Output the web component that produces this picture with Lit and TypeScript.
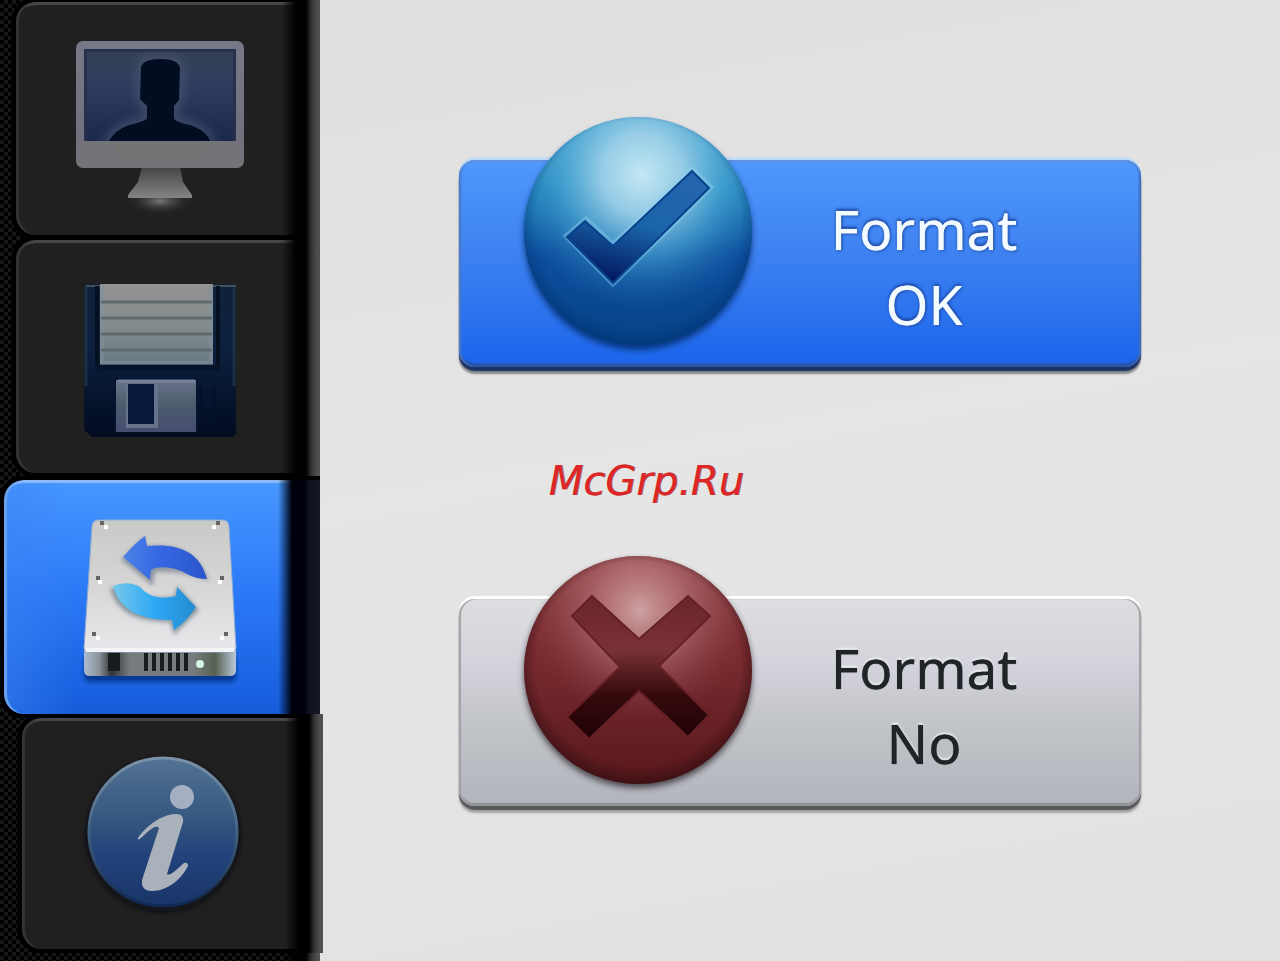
import { LitElement, html, css, svg } from "lit";
import { customElement, state } from "lit/decorators.js";

const monitorIcon = svg`
  <svg viewBox="72 22 176 192" aria-hidden="true">
    <defs>
      <linearGradient id="frame" x1="0" y1="0" x2="0" y2="1">
        <stop offset="0" stop-color="#777a86" /><stop offset=".75" stop-color="#71717f" /><stop offset="1" stop-color="#777475" />
      </linearGradient>
      <linearGradient id="screen" x1="0" y1="0" x2="0" y2="1">
        <stop offset="0" stop-color="#354054" /><stop offset=".3" stop-color="#303f61" /><stop offset="1" stop-color="#1b284d" />
      </linearGradient>
      <linearGradient id="stand" x1="0" y1="0" x2="0" y2="1">
        <stop offset="0" stop-color="#444" /><stop offset="1" stop-color="#858583" />
      </linearGradient>
      <radialGradient id="reflection">
        <stop offset="0" stop-color="#777" /><stop offset="1" stop-color="#222" stop-opacity="0" />
      </radialGradient>
      <clipPath id="screenClip"><rect x="85" y="49" width="150" height="91" /></clipPath>
      <filter id="halo"><feGaussianBlur stdDeviation="4" /></filter>
    </defs>
    <ellipse cx="160" cy="200" rx="36" ry="14" fill="url(#reflection)" />
    <path d="M142 166h38l3 15 9 13v3h-64v-3l10-13z" fill="url(#stand)" />
    <rect x="76" y="40" width="168" height="127" rx="7" fill="url(#frame)" />
    <path d="M77 140h166v20q0 6-6 6H83q-6 0-6-6z" fill="#73747a" />
    <path d="M112 142h98l-20 20h-62z" fill="#75776e" opacity=".6" />
    <rect x="84" y="48" width="152" height="92" fill="#26304a" />
    <rect x="87" y="51" width="146" height="89" fill="url(#screen)" />
    <g clip-path="url(#screenClip)">
      <path d="M141 66q2-8 20-8 17 0 19 9l-1 32-5 6v13q5 4 16 6 17 6 20 16h-101q6-11 20-16 13-3 18-6v-13l-7-7z" fill="#4d5972" stroke="#4d5972" stroke-width="10" opacity=".6" filter="url(#halo)" />
      <path d="M141 66q2-8 20-8 17 0 19 9l-1 32-5 6v13q5 4 16 6 17 6 20 16h-101q6-11 20-16 13-3 18-6v-13l-7-7z" fill="#020d22" />
    </g>
  </svg>`;

const floppyIcon = svg`
  <svg viewBox="72 261 176 192" aria-hidden="true">
    <defs>
      <linearGradient id="disk" x1="0" y1="0" x2="0" y2="1">
        <stop offset="0" stop-color="#10223a" /><stop offset=".4" stop-color="#0c2140" /><stop offset="1" stop-color="#020b20" />
      </linearGradient>
      <linearGradient id="paper" x1="0" y1="0" x2="0" y2="1">
        <stop offset="0" stop-color="#929391" /><stop offset=".5" stop-color="#838b8d" /><stop offset="1" stop-color="#6a7a84" />
      </linearGradient>
      <linearGradient id="shutter" x1="0" y1="0" x2="0" y2="1">
        <stop offset="0" stop-color="#68738a" /><stop offset=".5" stop-color="#4d5b6b" /><stop offset="1" stop-color="#464d70" />
      </linearGradient>
    </defs>
    <path d="M84 284h152v148q0 5-5 5H92l-8-7z" fill="url(#disk)" />
    <path d="M86 286v100M234 286v100" stroke="#1b3043" stroke-width="3" />
    <path d="M86 286h150" stroke="#41505a" stroke-width="2" />
    <path d="M97 286v80M218 286v80" stroke="#061020" stroke-width="4" />
    <rect x="100" y="284" width="113" height="80" fill="url(#paper)" />
    <path d="M102 284v79h109v-79" fill="none" stroke="#8291a0" stroke-width="4" opacity=".5" />
    <path d="M101 302h111M101 318h111M101 334h111M101 350h111" stroke="#5f6a6c" stroke-width="3" />
    <path d="M97 368h124" stroke="#05162c" stroke-width="6" />
    <path d="M114 378h84v54h-84z" fill="#051530" />
    <path d="M116 380h80v52h-80z" fill="url(#shutter)" />
    <path d="M118 381h77" stroke="#78839b" stroke-width="3" />
    <path d="M126 384h32v44h-32z" fill="#67728b" />
    <path d="M128 384h26v40h-26z" fill="#07183a" />
    <path d="M201 386v46M214 386v46" stroke="#03102a" stroke-width="3" />
  </svg>`;

const driveIcon = svg`
  <svg viewBox="72 501 176 192" aria-hidden="true">
    <defs>
      <linearGradient id="lid" x1="0" y1="0" x2="0" y2="1">
        <stop offset="0" stop-color="#c9c9c8" /><stop offset=".5" stop-color="#d6d6d6" /><stop offset="1" stop-color="#e9e8ec" />
      </linearGradient>
      <linearGradient id="front" x1="0" y1="0" x2="1" y2="0">
        <stop offset="0" stop-color="#a9bcd0" /><stop offset=".1" stop-color="#8b9296" /><stop offset=".18" stop-color="#303637" />
        <stop offset=".3" stop-color="#777b7d" /><stop offset=".72" stop-color="#777d80" /><stop offset=".86" stop-color="#566150" /><stop offset="1" stop-color="#b9c9d8" />
      </linearGradient>
      <linearGradient id="darkArrow" x1="0" y1="0" x2="1" y2="0">
        <stop offset="0" stop-color="#4c82e4" /><stop offset=".4" stop-color="#3769e4" /><stop offset="1" stop-color="#2a55c9" />
      </linearGradient>
      <linearGradient id="lightArrow" x1="0" y1="0" x2="1" y2="0">
        <stop offset="0" stop-color="#75c8ec" /><stop offset=".5" stop-color="#2ea8f5" /><stop offset="1" stop-color="#258bd0" />
      </linearGradient>
      <filter id="soft" x="-20%" y="-20%" width="140%" height="140%"><feGaussianBlur stdDeviation="2" /></filter>
    </defs>
    <rect x="84" y="655" width="152" height="27" rx="6" fill="#052a78" opacity=".75" filter="url(#soft)" />
    <path d="M84 646h152v24q0 6-6 6H90q-6 0-6-6z" fill="url(#front)" />
    <path d="M98 520h125q5 0 6 6l7 122q0 4-4 4H88q-4 0-4-4l8-122q1-6 6-6z" fill="url(#lid)" stroke="#8dabd0" stroke-width="1" />
    <path d="M86 650h148" stroke="#f4f3f6" stroke-width="4" />
    <path d="M146 653v18M154 653v18M162 653v18M170 653v18M178 653v18M186 653v18" stroke="#161c20" stroke-width="4" />
    <path d="M108 653h12v18h-12z" fill="#171d1e" />
    <circle cx="200" cy="664" r="4" fill="#d6f4df" />
    <path d="M100 521h4v4h-4zM216 521h4v4h-4zM96 576h4v4h-4zM220 576h4v4h-4zM92 632h4v4h-4zM224 632h4v4h-4z" fill="#69645f" />
    <path d="M104 525h4v4h-4zM212 525h4v4h-4zM98 580h4v4h-4zM218 580h4v4h-4zM96 636h4v4h-4zM220 636h4v4h-4z" fill="#fff" />
    <path d="M121 560l24-24v10c32-3 54 7 64 35-19-7-34-10-54-9l-2 14z" fill="#6d7684" opacity=".65" filter="url(#soft)" />
    <path d="M123 557q12-14 22-21l2 10c34-3 53 7 60 33q-11 0-20-5c-10-6-20-8-32-6l-4 2-1 10z" fill="url(#darkArrow)" />
    <path d="M110 588c7 26 29 34 60 34l4 13 25-25-22-24-2 10c-18 4-33 1-41-10z" fill="#516775" opacity=".6" filter="url(#soft)" />
    <path d="M113 586c7 25 28 34 59 34l2 10q13-9 22-23l-19-20-1 9c-16 4-27 1-36-9q-13-7-27-1z" fill="url(#lightArrow)" />
  </svg>`;

const infoIcon = svg`
  <svg viewBox="75 737 176 192" aria-hidden="true">
    <defs>
      <linearGradient id="info" x1="0" y1="0" x2="0" y2="1">
        <stop offset="0" stop-color="#527394" /><stop offset=".4" stop-color="#36577f" /><stop offset=".65" stop-color="#24437c" /><stop offset="1" stop-color="#183568" />
      </linearGradient>
      <linearGradient id="rim" x1="0" y1="0" x2="0" y2="1">
        <stop offset="0" stop-color="#7b93a8" /><stop offset=".5" stop-color="#41617f" /><stop offset="1" stop-color="#102852" />
      </linearGradient>
      <filter id="under" x="-20%" y="-20%" width="140%" height="140%"><feGaussianBlur stdDeviation="3" /></filter>
    </defs>
    <circle cx="163" cy="834" r="76" fill="#080d18" filter="url(#under)" />
    <circle cx="163" cy="831" r="74" fill="url(#info)" stroke="url(#rim)" stroke-width="3" />
    <circle cx="182" cy="796" r="12" fill="#a4b0c1" />
    <path d="M138 837c8-12 23-23 37-24q9-1 8 8l-16 52c3 3 11-6 17-11q4-1 4 3c-7 14-21 25-36 25-9 0-12-6-9-14l16-49c-3-5-13 5-18 10q-4 3-3 0z" fill="#a9b1bb" />
  </svg>`;

const okBadge = svg`
  <svg class="badge" viewBox="520 112 238 242" aria-hidden="true">
    <defs>
      <linearGradient id="okBase" x1="0" y1="0" x2="0" y2="1">
        <stop offset="0" stop-color="#72bddb" /><stop offset=".3" stop-color="#288fc1" /><stop offset=".6" stop-color="#0c4d9d" /><stop offset="1" stop-color="#064488" />
      </linearGradient>
      <radialGradient id="okShine" gradientUnits="userSpaceOnUse" cx="643" cy="175" r="135">
        <stop offset="0" stop-color="#c4e8f4" /><stop offset=".3" stop-color="#a0d2e9" stop-opacity=".9" /><stop offset=".6" stop-color="#4aa5d4" stop-opacity=".65" /><stop offset="1" stop-color="#1b6aae" stop-opacity="0" />
      </radialGradient>
      <radialGradient id="okEdge" gradientUnits="userSpaceOnUse" cx="639" cy="223" r="125">
        <stop offset=".82" stop-color="#003578" stop-opacity="0" /><stop offset="1" stop-color="#003070" stop-opacity=".65" />
      </radialGradient>
      <linearGradient id="tick" gradientUnits="userSpaceOnUse" x1="640" y1="170" x2="610" y2="285">
        <stop offset="0" stop-color="#2364ae" /><stop offset=".45" stop-color="#1a64aa" /><stop offset="1" stop-color="#001258" />
      </linearGradient>
      <filter id="okShadow" x="-20%" y="-20%" width="140%" height="140%"><feGaussianBlur stdDeviation="3" /></filter>
    </defs>
    <circle cx="639" cy="236" r="114" fill="#062963" opacity=".8" filter="url(#okShadow)" />
    <circle cx="639" cy="231" r="114" fill="url(#okBase)" />
    <circle cx="639" cy="231" r="114" fill="url(#okShine)" />
    <circle cx="639" cy="231" r="114" fill="url(#okEdge)" />
    <path d="M567 236l20-17 27 25 79-75 19 18-98 97z" fill="none" stroke="#8ed2ef" stroke-width="5" opacity=".4" />
    <path d="M568 237l18-16 28 25 79-75 17 17-96 95z" fill="url(#tick)" stroke="#07418c" stroke-width="2" />
  </svg>`;

const noBadge = svg`
  <svg class="badge" viewBox="520 552 238 242" aria-hidden="true">
    <defs>
      <linearGradient id="noBase" x1="0" y1="0" x2="0" y2="1">
        <stop offset="0" stop-color="#944549" /><stop offset=".4" stop-color="#7b2c31" /><stop offset="1" stop-color="#58181c" />
      </linearGradient>
      <radialGradient id="noShine" gradientUnits="userSpaceOnUse" cx="641" cy="611" r="112">
        <stop offset="0" stop-color="#cda1a2" /><stop offset=".35" stop-color="#bc7d80" stop-opacity=".75" /><stop offset="1" stop-color="#863d42" stop-opacity="0" />
      </radialGradient>
      <radialGradient id="noEdge" gradientUnits="userSpaceOnUse" cx="639" cy="665" r="122">
        <stop offset=".84" stop-color="#300c10" stop-opacity="0" /><stop offset="1" stop-color="#300c10" stop-opacity=".7" />
      </radialGradient>
      <linearGradient id="cross" gradientUnits="userSpaceOnUse" x1="0" y1="596" x2="0" y2="740">
        <stop offset="0" stop-color="#6a2528" /><stop offset=".38" stop-color="#793238" /><stop offset=".7" stop-color="#35090c" /><stop offset="1" stop-color="#1f0103" />
      </linearGradient>
      <filter id="noShadow" x="-20%" y="-20%" width="140%" height="140%"><feGaussianBlur stdDeviation="3" /></filter>
    </defs>
    <circle cx="639" cy="675" r="114" fill="#332a30" opacity=".8" filter="url(#noShadow)" />
    <circle cx="639" cy="671" r="114" fill="url(#noBase)" />
    <circle cx="639" cy="671" r="114" fill="url(#noShine)" />
    <circle cx="639" cy="671" r="114" fill="url(#noEdge)" />
    <path d="M573 617l20-20 47 43 49-43 22 20-51 50 50 49-21 22-49-46-50 48-22-22 53-50z" fill="url(#cross)" stroke="#642025" stroke-width="2" />
  </svg>`;

const tabs = [
  { id: "user", label: "User display", icon: monitorIcon },
  { id: "save", label: "Save", icon: floppyIcon },
  { id: "format", label: "Format", icon: driveIcon },
  { id: "info", label: "Information", icon: infoIcon },
];

@customElement("app-root")
export class AppRoot extends LitElement {
  @state() private active = "format";

  static styles = css`
    :host {
      display: grid;
      grid-template-columns: 1fr 3fr;
      min-height: 100vh;
      font-family: "Noto Sans", "Open Sans", sans-serif;
      --edge: linear-gradient(to left, #525252 0, #4b4b4b 4px, #303030 9px, #000 14px, #000 24px, #0000 38px);
    }
    * { box-sizing: border-box; }
    button { font: inherit; cursor: pointer; padding: 0; }
    .side {
      display: grid;
      grid-auto-rows: 1fr;
      gap: 5px;
      padding: 2px 0 12px;
      background-color: #090909;
      background-image: var(--edge),
        conic-gradient(#171717 25%, #000 0 50%, #171717 0 75%, #000 0);
      background-size: auto, 8px 8px;
    }
    .tab {
      position: relative;
      display: flex;
      align-items: center;
      justify-content: center;
      margin-left: 16px;
      padding-right: 16px;
      border: 0;
      border-radius: 20px 0 0 20px;
      background: #202020;
      box-shadow: inset 4px 0 1px -1px #343434, inset 0 4px 1px -1px #484848, 0 0 0 5px #000;
      clip-path: inset(-4px 0 -4px -6px);
    }
    .tab::after {
      content: "";
      position: absolute;
      inset: -4px 0 -4px auto;
      width: 44px;
      background: var(--edge);
    }
    .tab svg { display: block; width: 176px; height: 192px; overflow: visible; }
    .tab.on {
      margin: 2px 0 -3px 4px;
      padding-right: 4px;
      background:
        linear-gradient(to right, #3c83f280, #0000 70px),
        linear-gradient(#4798ff, #2d7bf8 45%, #155cdb);
      box-shadow: inset 4px 0 1px -1px #69a2ed, inset 0 4px 1px -1px #8dbaf8, 0 0 0 5px #000;
    }
    .tab.on::after {
      inset: 0 0 0 auto;
      background: linear-gradient(to left, #171724 0, #111322 10px, #00000c 17px, #00000c 28px, #0000 42px);
    }
    .tab:last-child { margin: 2px -3px 0 22px; padding-right: 19px; }
    .panel {
      display: flex;
      flex-direction: column;
      align-items: center;
      padding-top: 160px;
      background: linear-gradient(170deg, #dfdfdf, #e5e5e5 45%, #e2e2e2);
    }
    .choice {
      display: flex;
      align-items: center;
      width: 71%;
      height: 207px;
      padding: 0 50px 0 60px;
      border: 0;
      border-radius: 16px;
      font-size: 55px;
      line-height: 75px;
    }
    .ok {
      color: #f2fbff;
      text-shadow: 0 0 1px #f2fbff, 0 -2px 3px #17409c, 1px 1px 3px #1c4ba8;
      background: linear-gradient(#4f98fc, #3e82f1 45%, #1b65ec);
      box-shadow: inset 0 2px 1px #5f91de, inset 3px 0 2px -1px #4d78c5, inset -3px 0 2px -1px #3f69b8, inset 0 -4px 1px #2c54a8,
        0 4px 1px #1b3263, 0 7px 2px #858a88, 0 -3px 1px #c2dcf4;
    }
    .no {
      color: #202428;
      text-shadow: 0 0 1px #202428, 0 -2px 2px #f0f0f2;
      background: linear-gradient(#dddee0, #d4d4dc 30%, #bfc2c6 65%, #b2b5bd);
      box-shadow: inset 2px 0 1px #a2a2a5, inset -2px 0 1px #a2a2a5, inset 0 -3px 1px #929395,
        0 4px 1px #57585b, 0 7px 2px #a5a5a5, 0 -3px 0 #fff;
    }
    .badge { flex: none; width: 238px; height: 242px; margin-top: -62px; overflow: visible; }
    .text { flex: 1; text-align: center; padding-top: 4px; }
    .line { display: block; }
    .mark {
      display: grid;
      place-items: center;
      width: 100%;
      height: 232px;
      margin: 0;
      padding: 0 32% 4px 0;
      color: #df2626;
      font: italic 40px/48px "DejaVu Sans", sans-serif;
      text-shadow: 1px 0 0 #8f5a5a;
    }
  `;

  render() {
    return html`
      <nav class="side" aria-label="Settings">
        ${tabs.map(
          (tab) => html`<button
            class="tab ${tab.id === this.active ? "on" : ""}"
            aria-label=${tab.label}
            @click=${() => (this.active = tab.id)}
          >${tab.icon}</button>`
        )}
      </nav>
      <main class="panel">
        <button class="choice ok">
          ${okBadge}
          <span class="text"><span class="line">Format</span><span class="line">OK</span></span>
        </button>
        <p class="mark">McGrp.Ru</p>
        <button class="choice no">
          ${noBadge}
          <span class="text"><span class="line">Format</span><span class="line">No</span></span>
        </button>
      </main>
    `;
  }
}
